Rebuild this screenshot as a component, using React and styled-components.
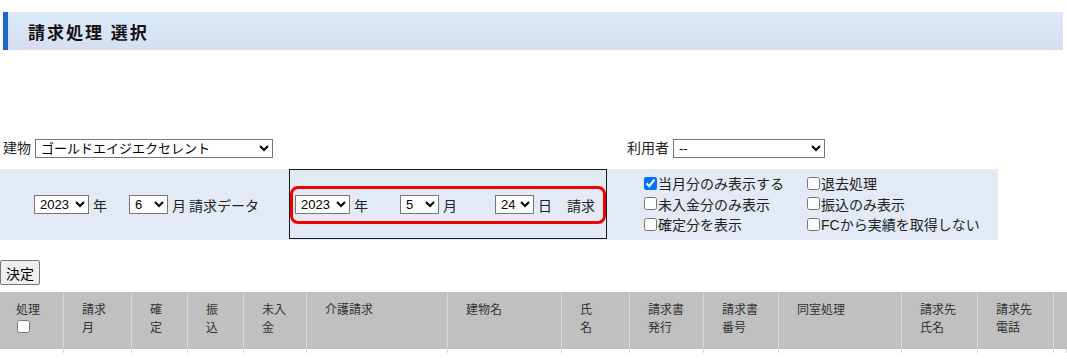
import React from "react";
import styled, { createGlobalStyle } from "styled-components";

const GlobalStyle = createGlobalStyle`
  body {
    margin: 0;
    background: #fff;
    color: #222;
    font-family: "Liberation Sans", "Noto Sans CJK JP", sans-serif;
    font-size: 14px;
  }
`;

const Page = styled.div`
  width: 1067px;
`;

const TitleBar = styled.div`
  margin: 12px 4px 0 3px;
  height: 38px;
  display: flex;
  align-items: center;
  border-left: 5px solid #1a69c9;
  background: linear-gradient(#dbeafa, #d6def0);
  padding-left: 20px;

  h1 {
    margin: 0;
    font-size: 17px;
    font-weight: bold;
    letter-spacing: 2px;
    color: #111;
  }
`;

const FilterRow = styled.div`
  margin-top: 89px;
  display: grid;
  grid-template-columns: 624px auto;
  align-items: center;
  height: 19px;
  padding-left: 3px;
`;

const Field = styled.div`
  display: flex;
  align-items: center;
  gap: 4px;
  height: 19px;
  line-height: 19px;
  white-space: nowrap;
`;

const Select = styled.select`
  width: ${(p) => p.$w}px;
  height: 19px;
  font-family: "Liberation Sans", "Noto Sans CJK JP", sans-serif;
  font-size: 13px;
  color: #000;
  border: 1px solid #767676;
  border-radius: 0;
  background: #fff;
  padding: 0 0 0 1px;
  margin: 0;
`;

const Panel = styled.div`
  margin-top: 11px;
  width: 998px;
  height: 71px;
  background: #e3eaf6;
  display: flex;
`;

const LeftPart = styled.div`
  width: 289px;
  display: flex;
  align-items: center;
  padding-left: 34px;
  box-sizing: border-box;
  white-space: nowrap;
`;

const MiddleBox = styled.div`
  width: 318px;
  height: 70px;
  box-sizing: border-box;
  border: 1px solid #1a1a1a;
  display: flex;
  align-items: center;
  padding-top: 1px;
`;

const Highlight = styled.div`
  width: 316px;
  height: 38px;
  box-sizing: border-box;
  border: 3px solid #f00000;
  border-radius: 8px;
  display: flex;
  align-items: center;
  padding-left: 2px;
  white-space: nowrap;
`;

const Unit = styled.span`
  margin-left: 4px;
  margin-right: ${(p) => p.$after || 0}px;
`;

const Options = styled.div`
  flex: 1;
  display: grid;
  grid-template-columns: 163px auto;
  grid-auto-rows: 20.5px;
  align-content: center;
  padding-left: 33px;
  padding-bottom: 2px;
`;

const Check = styled.label`
  display: flex;
  align-items: center;
  white-space: nowrap;

  input {
    width: 13px;
    height: 13px;
    margin: 0 1px 0 4px;
  }
`;

const SubmitButton = styled.button`
  display: block;
  margin-top: 20px;
  height: 25px;
  padding: 0 5px;
  font-family: "Liberation Sans", "Noto Sans CJK JP", sans-serif;
  font-size: 14px;
  color: #000;
  background: #efefef;
  border: 1px solid #767676;
  border-radius: 2px;
`;

const columns = "64px 68px 56px 56px 63px 141px 114px 68px 74px 75px 123px 76px 76px 1fr";

const HeadRow = styled.div`
  margin-top: 7px;
  display: grid;
  grid-template-columns: ${columns};
  background: #c0c0c0;
  height: 57px;
`;

const HeadCell = styled.div`
  border-right: 1px solid #d6d6d6;
  padding: 9px 0 0 ${(p) => p.$pad || 18}px;
  font-size: 12px;
  line-height: 18px;
  color: #333;

  input {
    margin: 1px 0 0 1px;
    width: 13px;
    height: 13px;
  }
`;

const BodyRow = styled.div`
  display: grid;
  grid-template-columns: ${columns};
  height: 4px;
`;

const BodyCell = styled.div`
  border-right: 1px solid #d6d6d6;
`;

const headers = [
  ["請求", "月"],
  ["確", "定"],
  ["振", "込"],
  ["未入", "金"],
  ["介護請求"],
  ["建物名"],
  ["氏", "名"],
  ["請求書", "発行"],
  ["請求書", "番号"],
  ["同室処理"],
  ["請求先", "氏名"],
  ["請求先", "電話"],
];

const years = ["2021", "2022", "2023", "2024"];
const months = Array.from({ length: 12 }, (_, i) => String(i + 1));
const days = Array.from({ length: 31 }, (_, i) => String(i + 1));

export default function App() {
  return (
    <Page>
      <GlobalStyle />
      <TitleBar>
        <h1>請求処理 選択</h1>
      </TitleBar>

      <FilterRow>
        <Field>
          建物
          <Select $w={238} defaultValue="gold">
            <option value="gold">ゴールドエイジエクセレント</option>
          </Select>
        </Field>
        <Field>
          利用者
          <Select $w={152} defaultValue="">
            <option value="">--</option>
          </Select>
        </Field>
      </FilterRow>

      <Panel>
        <LeftPart>
          <Select $w={55} defaultValue="2023">
            {years.map((y) => (
              <option key={y}>{y}</option>
            ))}
          </Select>
          <Unit $after={22}>年</Unit>
          <Select $w={39} defaultValue="6">
            {months.map((m) => (
              <option key={m}>{m}</option>
            ))}
          </Select>
          <Unit $after={3}>月</Unit>
          請求データ
        </LeftPart>

        <MiddleBox>
          <Highlight>
            <Select $w={55} defaultValue="2023">
              {years.map((y) => (
                <option key={y}>{y}</option>
              ))}
            </Select>
            <Unit $after={32}>年</Unit>
            <Select $w={39} defaultValue="5">
              {months.map((m) => (
                <option key={m}>{m}</option>
              ))}
            </Select>
            <Unit $after={38}>月</Unit>
            <Select $w={39} defaultValue="24">
              {days.map((d) => (
                <option key={d}>{d}</option>
              ))}
            </Select>
            <Unit $after={15}>日</Unit>
            請求
          </Highlight>
        </MiddleBox>

        <Options>
          <Check>
            <input type="checkbox" defaultChecked />
            当月分のみ表示する
          </Check>
          <Check>
            <input type="checkbox" />
            退去処理
          </Check>
          <Check>
            <input type="checkbox" />
            未入金分のみ表示
          </Check>
          <Check>
            <input type="checkbox" />
            振込のみ表示
          </Check>
          <Check>
            <input type="checkbox" />
            確定分を表示
          </Check>
          <Check>
            <input type="checkbox" />
            FCから実績を取得しない
          </Check>
        </Options>
      </Panel>

      <SubmitButton>決定</SubmitButton>

      <HeadRow>
        <HeadCell $pad={16}>
          処理
          <br />
          <input type="checkbox" />
        </HeadCell>
        {headers.map((lines, i) => (
          <HeadCell key={i}>
            {lines.map((l, j) => (
              <div key={j}>{l}</div>
            ))}
          </HeadCell>
        ))}
        <HeadCell />
      </HeadRow>
      <BodyRow>
        {Array.from({ length: 14 }, (_, i) => (
          <BodyCell key={i} />
        ))}
      </BodyRow>
    </Page>
  );
}
